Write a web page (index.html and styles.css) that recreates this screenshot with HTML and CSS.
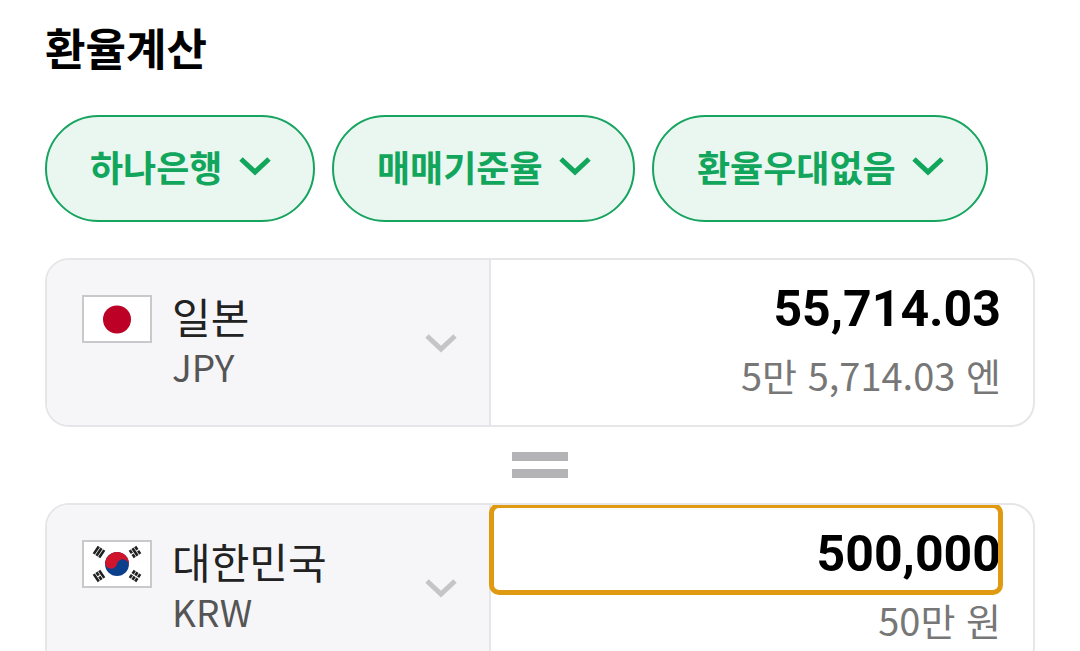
FILE: index.html
```html
<!DOCTYPE html>
<html lang="ko">
<head>
    <meta charset="UTF-8">
    <meta name="viewport" content="width=device-width, initial-scale=1.0">
    <title>환율계산</title>
    <link rel="stylesheet" href="styles.css">
</head>
<body>
    <main class="calculator">
        <h1 class="title">환율계산</h1>

        <div class="filters">
            <label class="filter">
                <select class="filter-select" aria-label="은행">
                    <option>하나은행</option>
                </select>
                <svg class="arrow" viewBox="0 0 32 20" aria-hidden="true"><path d="M2 3l14 13L30 3"/></svg>
            </label>
            <label class="filter">
                <select class="filter-select" aria-label="환율 기준">
                    <option>매매기준율</option>
                </select>
                <svg class="arrow" viewBox="0 0 32 20" aria-hidden="true"><path d="M2 3l14 13L30 3"/></svg>
            </label>
            <label class="filter">
                <select class="filter-select" aria-label="환율 우대">
                    <option>환율우대없음</option>
                </select>
                <svg class="arrow" viewBox="0 0 32 20" aria-hidden="true"><path d="M2 3l14 13L30 3"/></svg>
            </label>
        </div>

        <div class="card">
            <label class="country">
                <svg class="flag" viewBox="0 0 66 44" aria-hidden="true">
                    <circle cx="33" cy="22.5" r="14" fill="#bc0026"/>
                </svg>
                <span class="country-text">
                    <select class="country-select" aria-label="통화">
                        <option>일본</option>
                    </select>
                    <span class="code">JPY</span>
                </span>
                <svg class="arrow arrow-gray" viewBox="0 0 32 20" aria-hidden="true"><path d="M2 3l14 13L30 3"/></svg>
            </label>
            <div class="amount">
                <input class="amount-input" type="text" inputmode="decimal" aria-label="일본 JPY 금액" value="55,714.03">
                <span class="amount-text">5만 5,714.03 엔</span>
            </div>
        </div>

        <div class="equals"></div>

        <div class="card">
            <label class="country">
                <svg class="flag" viewBox="0 0 66 44" aria-hidden="true">
                    <circle cx="33" cy="22" r="12" fill="#0b3f8c"/>
                    <path d="M21 22a12 12 0 0 1 24 0a6 6 0 0 0-12 0a6 6 0 0 1-12 0z" fill="#d0142c" transform="rotate(12 33 22)"/>
                    <g stroke="#222" stroke-width="2.6">
                        <path d="M-4.5-3.3h9M-4.5 0h9M-4.5 3.3h9" transform="translate(15 10) rotate(-56)"/>
                        <path d="M-4.5-3.3h3.9M.6-3.3h3.9M-4.5 0h9M-4.5 3.3h3.9M.6 3.3h3.9" transform="translate(51 10) rotate(56)"/>
                        <path d="M-4.5-3.3h9M-4.5 0h3.9M.6 0h3.9M-4.5 3.3h9" transform="translate(15 34) rotate(56)"/>
                        <path d="M-4.5-3.3h3.9M.6-3.3h3.9M-4.5 0h3.9M.6 0h3.9M-4.5 3.3h3.9M.6 3.3h3.9" transform="translate(51 34) rotate(-56)"/>
                    </g>
                </svg>
                <span class="country-text">
                    <select class="country-select" aria-label="통화">
                        <option>대한민국</option>
                    </select>
                    <span class="code">KRW</span>
                </span>
                <svg class="arrow arrow-gray" viewBox="0 0 32 20" aria-hidden="true"><path d="M2 3l14 13L30 3"/></svg>
            </label>
            <div class="amount">
                <input class="amount-input active" type="text" inputmode="decimal" aria-label="대한민국 KRW 금액" value="500,000">
                <span class="amount-text">50만 원</span>
            </div>
        </div>
    </main>
</body>
</html>
```
FILE: styles.css
```css
* {
    box-sizing: border-box;
}
html {
    overflow: hidden;
}
body {
    margin: 0;
    background: #fff;
    font-family: "Noto Sans CJK KR", sans-serif;
}
select, input {
    margin: 0;
    padding: 0;
    border: 0;
    background: none;
    font-family: inherit;
    appearance: none;
}
.calculator {
    padding: 15px 45px;
}
.title {
    margin: 0 0 36px;
    font-size: 44px;
    line-height: 64px;
    font-weight: 700;
    color: #000;
}
.filters {
    display: flex;
    gap: 17px;
    margin-bottom: 36px;
}
.filter {
    display: flex;
    align-items: center;
    gap: 16px;
    height: 107px;
    padding: 0 42px 6px 43px;
    border: 2px solid #16a45f;
    border-radius: 54px;
    background: #e9f7f0;
    color: #12a55c;
}
.filter-select {
    color: inherit;
    font-size: 36px;
    font-weight: 700;
}
.arrow {
    flex: none;
    width: 32px;
    height: 20px;
    fill: none;
    stroke: currentColor;
    stroke-width: 5;
}
.arrow-gray {
    align-self: center;
    color: #c5c5c7;
}
.card {
    display: grid;
    grid-template-columns: 45% 1fr;
    border: 2px solid #e6e6e8;
    border-radius: 24px;
    overflow: hidden;
}
.country {
    display: flex;
    align-items: flex-start;
    gap: 20px;
    padding: 0 32px 0 35px;
    border-right: 2px solid #e6e6e8;
    background: #f6f6f9;
}
.flag {
    flex: none;
    width: 70px;
    height: 48px;
    margin-top: 35px;
    border: 2px solid #c9c9cb;
    background: #fff;
}
.country-text {
    display: flex;
    flex: 1;
    flex-direction: column;
    align-items: flex-start;
    padding-top: 25px;
}
.country-select {
    height: 60px;
    color: #222;
    font-size: 42px;
}
.code {
    color: #555;
    font-size: 37px;
    line-height: 42px;
}
.amount {
    display: flex;
    flex-direction: column;
    padding: 0 32px 23px 0;
}
.amount-input {
    width: 100%;
    height: 88px;
    padding-top: 10px;
    font-family: Roboto, sans-serif;
    font-size: 50px;
    font-weight: 700;
    text-align: right;
    color: #000;
}
.amount-input.active {
    border-radius: 8px;
    outline: 5px solid #e09a12;
    outline-offset: -3px;
}
.amount-text {
    color: #777;
    font-size: 38px;
    line-height: 54px;
    text-align: right;
}
.equals {
    width: 56px;
    height: 26px;
    margin: 25px auto;
    border-top: 9px solid #b4b4b6;
    border-bottom: 9px solid #b4b4b6;
}
```
